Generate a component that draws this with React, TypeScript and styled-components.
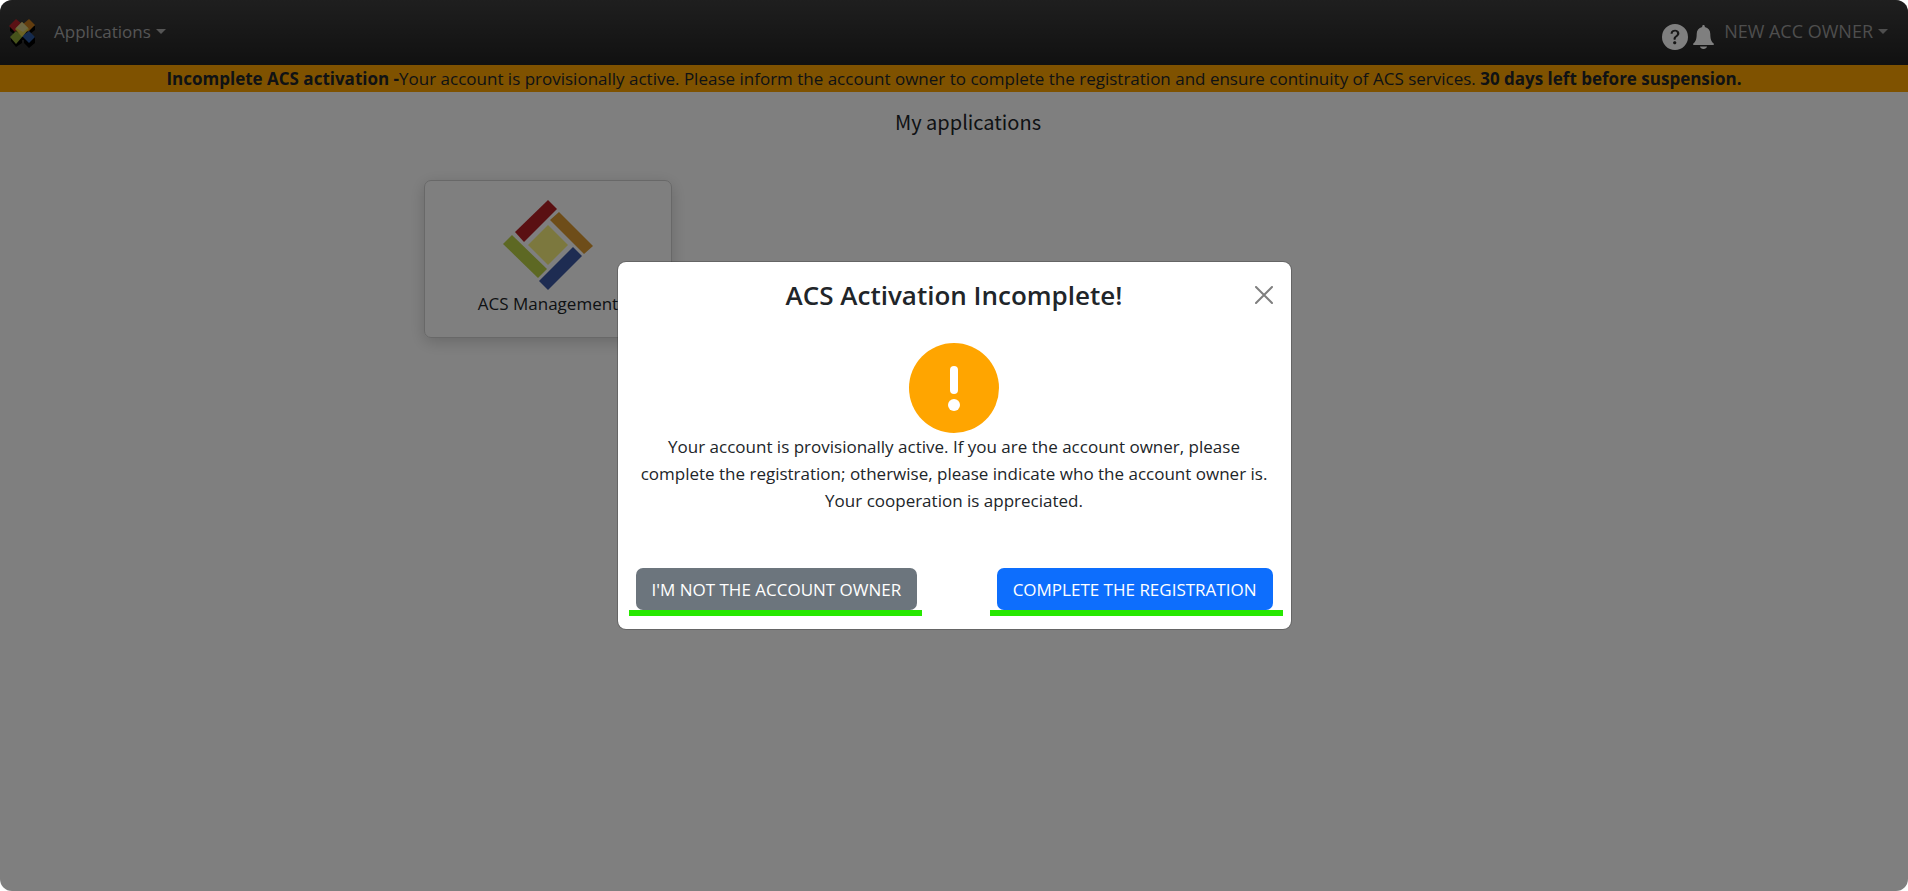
import React from "react";
import styled, { createGlobalStyle } from "styled-components";

const GlobalStyle = createGlobalStyle`
  *, *::before, *::after { box-sizing: border-box; }
  html { background: #fff; }
  body {
    margin: 0;
    color: #212529;
    font-family: "Segoe UI", "Open Sans", "Noto Sans", sans-serif;
    font-size: 17px;
    line-height: 27px;
  }
  h1, h2, p { margin: 0; }
  button { font: inherit; cursor: pointer; }
`;

const Page = styled.div`
  position: relative;
  display: flex;
  flex-direction: column;
  min-height: 100vh;
  background: #fff;
  border-radius: 12px;
  overflow: hidden;
`;

const NavBar = styled.header`
  display: flex;
  align-items: center;
  height: 65px;
  padding: 0 20px 0 9px;
  background: linear-gradient(#3e3e3e, #222);
`;

const Brand = styled.a`
  display: flex;
  margin-right: 18px;
`;

const MenuButton = styled.button<{ $account?: boolean }>`
  display: flex;
  align-items: center;
  gap: 5px;
  padding: 0 0 2px;
  border: 0;
  background: none;
  color: ${(p) => (p.$account ? "#9c9c9c" : "#aaa")};
  font-size: ${(p) => (p.$account ? 18 : 17)}px;

  &::after {
    content: "";
    border: 5px solid transparent;
    border-top-color: currentColor;
    border-bottom: 0;
  }
`;

const NavActions = styled.div`
  display: flex;
  align-items: center;
  gap: 5px;
  margin: 8px 10px 0 auto;
`;

const IconButton = styled.button`
  display: flex;
  padding: 0;
  border: 0;
  background: none;
  color: #fff;
`;

const Banner = styled.div`
  background: orange;
  color: #212529;
  text-align: center;
`;

const Main = styled.main`
  flex: 1;
  padding: 16px 0 0 28px;
`;

const Heading = styled.h1`
  font-family: "Noto Sans CJK SC", "Open Sans", sans-serif;
  font-size: 20px;
  line-height: 27px;
  font-weight: 400;
  text-align: center;
`;

const AppGrid = styled.div`
  display: grid;
  grid-template-columns: repeat(auto-fill, 248px);
  gap: 32px;
  max-width: 1088px;
  margin: 45px auto 0;
`;

const AppCard = styled.a`
  display: flex;
  flex-direction: column;
  align-items: center;
  height: 158px;
  padding: 19px;
  border: 1px solid #d0d0d0;
  border-radius: 7px;
  box-shadow: 0 4px 16px rgba(0, 0, 0, 0.18);
  color: inherit;
  text-decoration: none;
`;

const Backdrop = styled.div`
  position: absolute;
  inset: 0;
  display: flex;
  align-items: center;
  justify-content: center;
  padding: 16px;
  background: rgba(0, 0, 0, 0.5);
`;

const Dialog = styled.section`
  width: 100%;
  max-width: 675px;
  border: 1px solid rgba(0, 0, 0, 0.2);
  border-radius: 9px;
  background: #fff;
  background-clip: padding-box;
`;

const DialogHeader = styled.div`
  display: grid;
  grid-template-columns: 1fr auto 1fr;
  align-items: center;
  height: 65px;
  padding: 0 18px;
`;

const DialogTitle = styled.h2`
  grid-column: 2;
  font-size: 26px;
  line-height: 40px;
  font-weight: 600;
`;

const CloseButton = styled(IconButton)`
  justify-self: end;
  color: #7f7f7f;
`;

const DialogBody = styled.div`
  display: flex;
  flex-direction: column;
  align-items: center;
  padding: 16px 18px;
  text-align: center;
`;

const DialogFooter = styled.div`
  display: flex;
  justify-content: space-between;
  padding: 38px 8px 13px 11px;
`;

const MarkedAction = styled.div<{ $right?: boolean }>`
  padding: 0 ${(p) => (p.$right ? 10 : 5)}px 0 7px;
  border-bottom: 6px solid #27e800;
`;

const ActionButton = styled.button<{ $primary?: boolean }>`
  display: block;
  height: 42px;
  padding: 0 16px;
  border: 0;
  border-radius: 7px;
  background: ${(p) => (p.$primary ? "#0d6efd" : "#6c757d")};
  color: #fff;
`;

const BrandMark = () => (
  <svg width="27" height="30" viewBox="0 0 27 30" aria-hidden="true">
    <path d="M1 8v5l5 4-4 3v3l5 6 6-4v-3h2v3l5 5 6-5v-6l-5-3 5-4V8z" fill="#000" />
    <path d="M7 1l6 5-7 8-6-6z" fill="#b5222b" />
    <path d="M20 1l6 6-7 7-6-7z" fill="#c47a1e" />
    <path d="M7 13l7 5-7 8-6-7z" fill="#8fa637" />
    <path d="M20 13l6 6-6 6-7-7z" fill="#2b569c" />
    <path d="M13 4l7 7-7 8-7-8z" fill="#d9c648" />
    <path d="M13 4l6 6-5 4-7-4z" fill="#d6cd88" />
  </svg>
);

const AppLogo = () => (
  <svg width="90" height="90" viewBox="0 0 90 90" aria-hidden="true">
    <path d="M45 0l9 9-33 33-9-10z" fill="#b52025" />
    <path d="M56 12l34 34-9 8-34-34z" fill="#dc9a32" />
    <path d="M9 35l35 34-9 9L0 44z" fill="#bad046" />
    <path d="M70 47l9 9-34 34-9-9z" fill="#3d59a4" />
    <path d="M45 25l20 20-20 20-20-20z" fill="#f8f17c" />
  </svg>
);

const HelpIcon = () => (
  <svg width="26" height="26" viewBox="0 0 16 16" fill="currentColor" aria-hidden="true">
    <path d="M16 8A8 8 0 1 1 0 8a8 8 0 0 1 16 0M5.496 6.033h.825c.138 0 .248-.113.266-.25.09-.656.54-1.134 1.342-1.134.686 0 1.314.343 1.314 1.168 0 .635-.374.927-.965 1.371-.673.489-1.206 1.06-1.168 1.987l.003.217a.25.25 0 0 0 .25.246h.811a.25.25 0 0 0 .25-.25v-.105c0-.718.273-.927 1.01-1.486.609-.463 1.244-.977 1.244-2.056 0-1.511-1.276-2.241-2.673-2.241-1.267 0-2.655.59-2.75 2.286a.237.237 0 0 0 .241.247m2.325 6.443c.61 0 1.029-.394 1.029-.927 0-.552-.42-.94-1.029-.94-.584 0-1.009.388-1.009.94 0 .533.425.927 1.01.927z" />
  </svg>
);

const BellIcon = () => (
  <svg width="21" height="24" viewBox="0 0 21 24" fill="currentColor" aria-hidden="true">
    <path d="M10.500 0c.8 0 1.300.6 1.300 1.300v.8c3.600.8 5.500 3.500 5.500 7 0 5 1 7.600 3.300 9.500.7.600.3 1.400-.5 1.400H.9c-.8 0-1.200-.8-.5-1.400C2.700 16.700 3.700 14.100 3.700 9.100c0-3.500 1.900-6.200 5.500-7v-.8C9.200.6 9.700 0 10.500 0zM7 21.500h7c-.2 1.400-1.700 2.500-3.500 2.500S7.200 22.900 7 21.500z" />
  </svg>
);

const CloseIcon = () => (
  <svg width="18" height="18" viewBox="0 0 18 18" fill="none" stroke="currentColor" strokeWidth="2" strokeLinecap="round" aria-hidden="true">
    <path d="M1 1l16 16M17 1L1 17" />
  </svg>
);

const WarningIcon = () => (
  <svg width="90" height="90" viewBox="0 0 90 90" aria-hidden="true">
    <circle cx="45" cy="45" r="45" fill="orange" />
    <rect x="41" y="23" width="8" height="28" rx="4" fill="#fff" />
    <circle cx="45" cy="62" r="6" fill="#fff" />
  </svg>
);

export default function App() {
  return (
    <>
      <GlobalStyle />
      <Page>
        <NavBar>
          <Brand href="#" aria-label="Home">
            <BrandMark />
          </Brand>
          <MenuButton>Applications</MenuButton>
          <NavActions>
            <IconButton aria-label="Help">
              <HelpIcon />
            </IconButton>
            <IconButton aria-label="Notifications">
              <BellIcon />
            </IconButton>
          </NavActions>
          <MenuButton $account>NEW ACC OWNER</MenuButton>
        </NavBar>
        <Banner role="status">
          <strong>Incomplete ACS activation -</strong>Your account is provisionally active. Please inform the
          account owner to complete the registration and ensure continuity of ACS services.{" "}
          <strong>30 days left before suspension.</strong>
        </Banner>
        <Main>
          <Heading>My applications</Heading>
          <AppGrid>
            <AppCard href="#">
              <AppLogo />
              <span>ACS Management</span>
            </AppCard>
          </AppGrid>
        </Main>
        <Backdrop>
          <Dialog role="dialog" aria-modal="true" aria-labelledby="dialog-title">
            <DialogHeader>
              <DialogTitle id="dialog-title">ACS Activation Incomplete!</DialogTitle>
              <CloseButton aria-label="Close">
                <CloseIcon />
              </CloseButton>
            </DialogHeader>
            <DialogBody>
              <WarningIcon />
              <p>
                Your account is provisionally active. If you are the account owner, please complete the
                registration; otherwise, please indicate who the account owner is. Your cooperation is
                appreciated.
              </p>
            </DialogBody>
            <DialogFooter>
              <MarkedAction>
                <ActionButton>I'M NOT THE ACCOUNT OWNER</ActionButton>
              </MarkedAction>
              <MarkedAction $right>
                <ActionButton $primary>COMPLETE THE REGISTRATION</ActionButton>
              </MarkedAction>
            </DialogFooter>
          </Dialog>
        </Backdrop>
      </Page>
    </>
  );
}
